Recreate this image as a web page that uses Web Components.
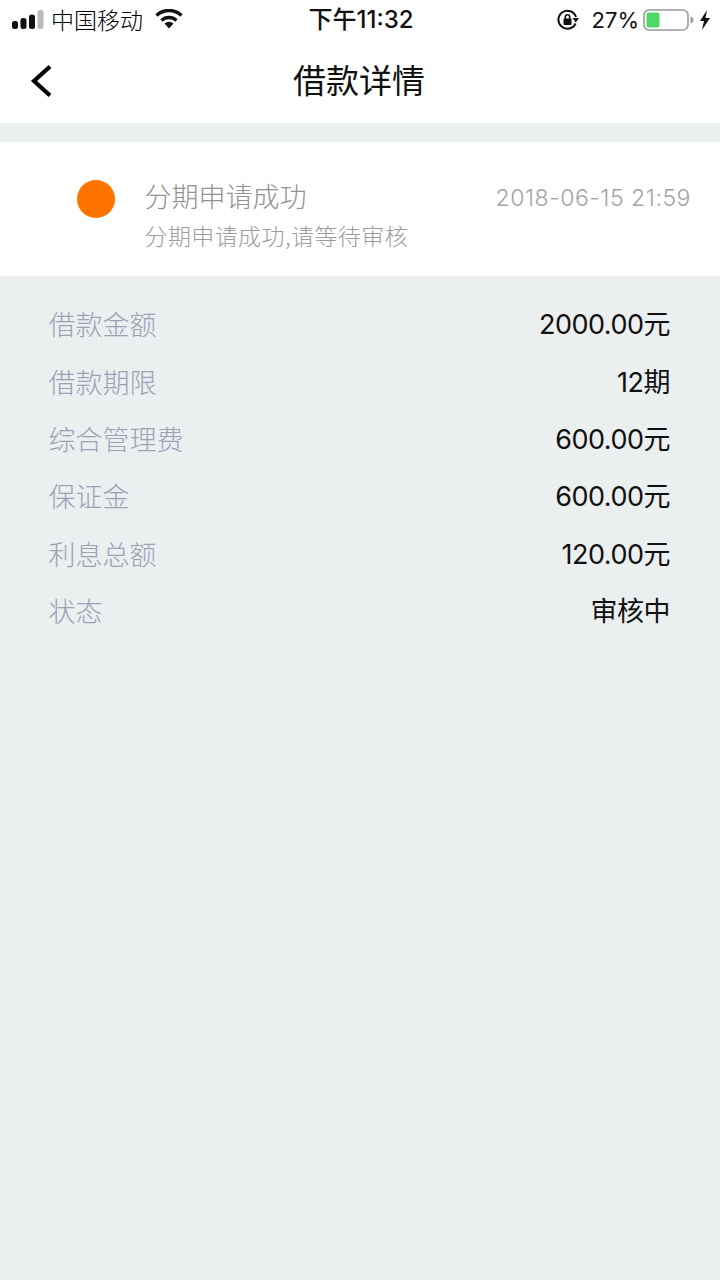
<!DOCTYPE html>
<html>
<head>
<meta charset="utf-8">
<style>
    html, body { margin: 0; padding: 0; background: #ebeff0; }
    body { font-family: "Noto Sans CJK SC", "Liberation Sans", sans-serif; width: 720px; height: 1280px; overflow: hidden; }
</style>
</head>
<body>
<status-bar></status-bar>
<nav-bar>借款详情</nav-bar>
<status-card time="2018-06-15 21:59" title="分期申请成功" desc="分期申请成功,请等待审核"></status-card>
<detail-list>
    <detail-row label="借款金额" value="2000.00元"></detail-row>
    <detail-row label="借款期限" value="12期"></detail-row>
    <detail-row label="综合管理费" value="600.00元"></detail-row>
    <detail-row label="保证金" value="600.00元"></detail-row>
    <detail-row label="利息总额" value="120.00元"></detail-row>
    <detail-row label="状态" value="审核中"></detail-row>
</detail-list>
<script>
class StatusBar extends HTMLElement {
    constructor() {
        super();
        this.attachShadow({ mode: 'open' });
        this.shadowRoot.innerHTML = `
            <style>
                :host { display: flex; align-items: center; height: 40px; background: #fff; color: #111; font-size: 24px; position: relative; }
                .left { display: flex; align-items: center; padding-left: 12px; flex: 1; }
                .carrier { margin-left: 7px; font-size: 23px; font-weight: 300; line-height: 38px; margin-bottom: 2px; color: #000; }
                .wifi { margin-left: 12px; margin-top: -2px; }
                .time { position: absolute; left: 2px; right: 0; text-align: center; font-family: Inter, "Noto Sans CJK SC", sans-serif; font-weight: 500; font-size: 24px; line-height: 38px; }
                .right { display: flex; align-items: center; padding-right: 9px; }
                .pct { font-family: Inter, sans-serif; font-size: 22px; margin: 0 4px 0 13px; }
                svg { display: block; }
            </style>
            <div class="left">
                <svg width="32" height="20" viewBox="0 0 32 20">
                    <rect x="0" y="11" width="6" height="8" rx="2.5" fill="#111"/>
                    <rect x="8.5" y="8" width="6" height="11" rx="2.5" fill="#111"/>
                    <rect x="17" y="4.5" width="6" height="14.5" rx="2.5" fill="#111"/>
                    <rect x="25.5" y="0" width="6" height="19" rx="2.5" fill="#bbb"/>
                </svg>
                <span class="carrier">中国移动</span>
                <svg class="wifi" width="28" height="20" viewBox="0 0 28 20">
                    <path d="M1.5 6.5a18 18 0 0 1 25 0" fill="none" stroke="#111" stroke-width="3.4"/>
                    <path d="M6.5 11.5a11 11 0 0 1 15 0" fill="none" stroke="#111" stroke-width="3.4"/>
                    <path d="M9.5 14.5a7 7 0 0 1 9 0L14 19.5z" fill="#111"/>
                </svg>
            </div>
            <div class="time">下午11:32</div>
            <div class="right">
                <svg width="22" height="22" viewBox="0 0 22 22">
                    <path d="M18.6 14.5A9 9 0 1 1 19 8" fill="none" stroke="#111" stroke-width="2"/>
                    <path d="M15.5 9h6.5l-3.2 4.5z" fill="#111"/>
                    <rect x="6.5" y="9.5" width="8" height="6.5" rx="1" fill="#111"/>
                    <path d="M8.3 10V8a2.2 2.2 0 0 1 4.4 0v2" fill="none" stroke="#111" stroke-width="1.6"/>
                </svg>
                <span class="pct">27%</span>
                <svg width="52" height="24" viewBox="0 0 52 24">
                    <rect x="1" y="2" width="44" height="20" rx="5" fill="#fff" stroke="#9a9a9a" stroke-width="1.6"/>
                    <rect x="3.5" y="4.5" width="13" height="15" rx="2" fill="#4cd964"/>
                    <path d="M47.5 8.5c2 .3 3 1.7 3 3.5s-1 3.2-3 3.5z" fill="#9a9a9a"/>
                </svg>
                <svg style="margin-left:4px" width="12" height="20" viewBox="0 0 12 20">
                    <path d="M8 0 1 11h4l-2 9 8-12H6.500z" fill="#111"/>
                </svg>
            </div>
        `;
    }
}
customElements.define('status-bar', StatusBar);

class NavBar extends HTMLElement {
    constructor() {
        super();
        this.attachShadow({ mode: 'open' });
        this.shadowRoot.innerHTML = `
            <style>
                :host { display: flex; align-items: center; justify-content: center; height: 83px; background: #fff; position: relative; color: #111; font-size: 33px; font-weight: 400; }
                .back { position: absolute; left: 30px; top: 24px; }
                .title { line-height: 80px; margin: 0 2px 5px 0; }
            </style>
            <svg class="back" width="24" height="34" viewBox="0 0 24 34">
                <path d="M20 2.500 4 17l16 14.500" fill="none" stroke="#000" stroke-width="4.200"/>
            </svg>
            <span class="title"><slot></slot></span>
        `;
    }
}
customElements.define('nav-bar', NavBar);

class StatusCard extends HTMLElement {
    constructor() {
        super();
        this.attachShadow({ mode: 'open' });
        this.shadowRoot.innerHTML = `
            <style>
                :host { display: flex; margin-top: 19px; height: 134px; background: #fff; box-sizing: border-box; padding: 38px 29px 0 77px; font-weight: 300; }
                .dot { width: 38px; height: 38px; border-radius: 50%; background: #ff7300; flex: none; margin-right: 29.500px; }
                .body { flex: 1; min-width: 0; margin-top: -1px; }
                .top { display: flex; justify-content: space-between; align-items: center; height: 34px; }
                .title { font-size: 27px; color: #929292; line-height: 34px; }
                .time { font-family: Inter, sans-serif; font-size: 23px; color: #a2a4a6; letter-spacing: 0.55px; margin-top: 3px; }
                .desc { font-size: 23px; color: #9c9c9c; margin-top: 6px; line-height: 32px; letter-spacing: 0.4px; }
            </style>
            <div class="dot"></div>
            <div class="body">
                <div class="top"><span class="title"></span><span class="time"></span></div>
                <div class="desc"></div>
            </div>
        `;
    }
    connectedCallback() {
        this.shadowRoot.querySelector('.title').textContent = this.getAttribute('title');
        this.shadowRoot.querySelector('.time').textContent = this.getAttribute('time');
        this.shadowRoot.querySelector('.desc').textContent = this.getAttribute('desc');
    }
}
customElements.define('status-card', StatusCard);

class DetailList extends HTMLElement {
    constructor() {
        super();
        this.attachShadow({ mode: 'open' });
        this.shadowRoot.innerHTML = `
            <style>
                :host { display: flex; flex-direction: column; padding: 19px 50px 0 48.500px; }
            </style>
            <slot></slot>
        `;
    }
}
customElements.define('detail-list', DetailList);

class DetailRow extends HTMLElement {
    constructor() {
        super();
        this.attachShadow({ mode: 'open' });
        this.shadowRoot.innerHTML = `
            <style>
                :host { display: flex; justify-content: space-between; align-items: center; height: 57.400px; }
                .label { font-size: 27px; font-weight: 300; color: #9da1b6; }
                .value { font-family: Inter, "Noto Sans CJK SC", sans-serif; font-size: 27px; letter-spacing: -0.5px; color: #111; margin-bottom: 2px; }
            </style>
            <span class="label"></span>
            <span class="value"></span>
        `;
    }
    connectedCallback() {
        this.shadowRoot.querySelector('.label').textContent = this.getAttribute('label');
        this.shadowRoot.querySelector('.value').textContent = this.getAttribute('value');
    }
}
customElements.define('detail-row', DetailRow);
</script>
</body>
</html>
